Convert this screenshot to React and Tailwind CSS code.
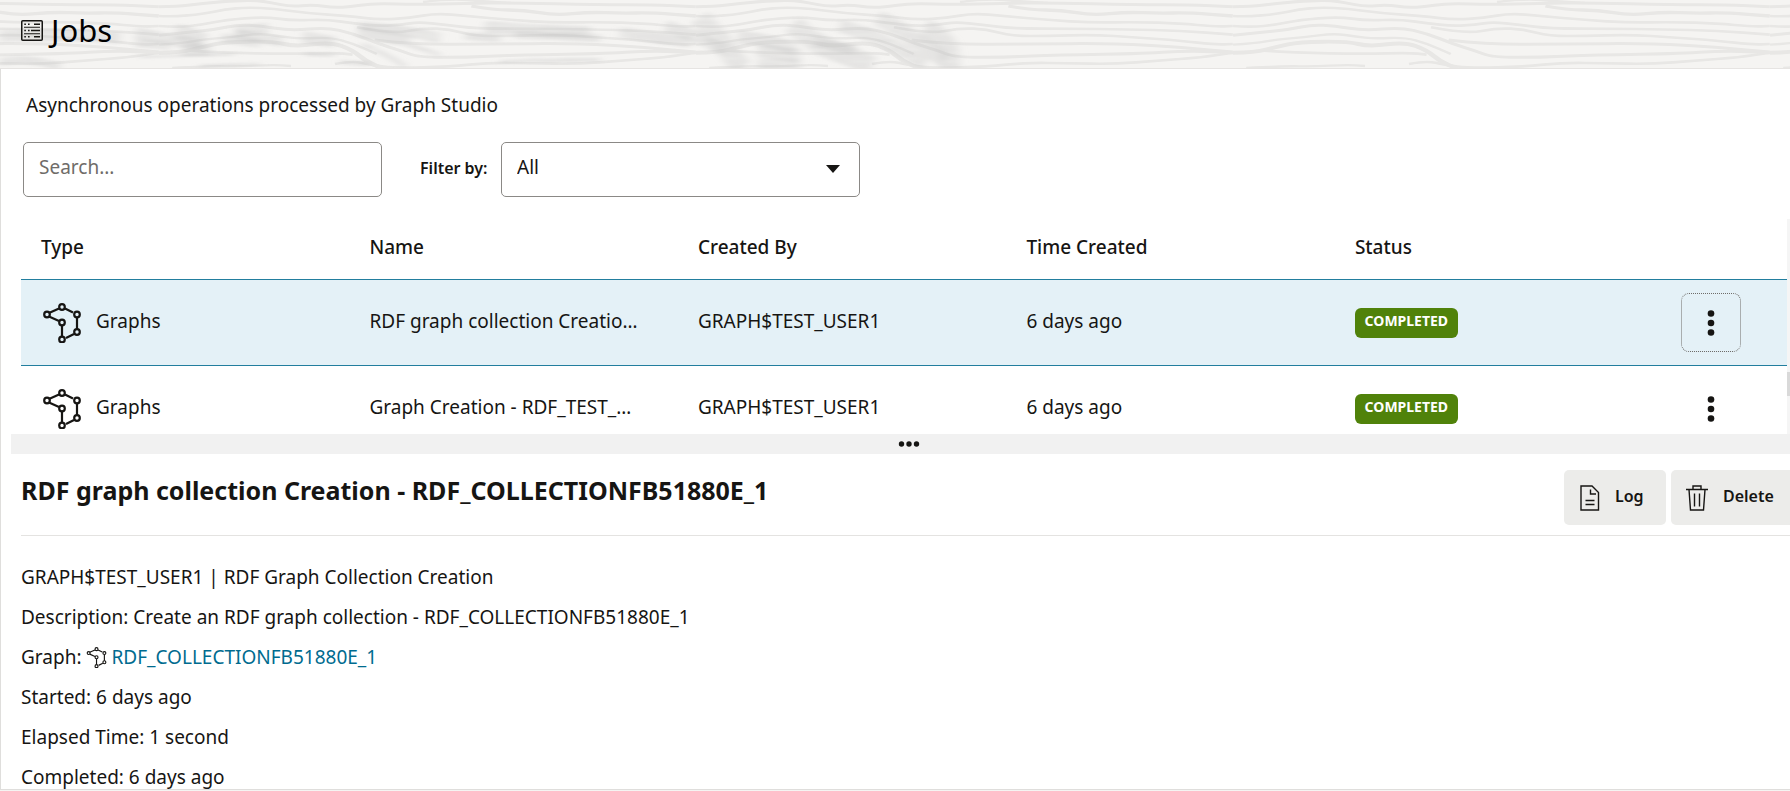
import React, { useState } from 'react';

const JOBS = [
    {
        id: 1,
        type: 'Graphs',
        name: 'RDF graph collection Creatio…',
        createdBy: 'GRAPH$TEST_USER1',
        created: '6 days ago',
        status: 'COMPLETED',
    },
    {
        id: 2,
        type: 'Graphs',
        name: 'Graph Creation - RDF_TEST_…',
        createdBy: 'GRAPH$TEST_USER1',
        created: '6 days ago',
        status: 'COMPLETED',
    },
];

// Wood grain lines of one banner tile: [stroke width, x, y, x, y, ...]
const GRAIN = [
    [9, 300, 20, 340, 20, 400, 10, 460, 3, 520, 1, 555, 8, 600, 20, 650, 14, 700, 24, 760, 16, 800, 10, 880, 14, 1000, 10, 1100, 8, 1300, 14, 1420, 14, 1520, 20],
    [7, 900, 6, 960, -4, 1040, 4, 1100, 9],
    [8, 300, 48, 330, 50, 400, 42, 450, 28, 500, 22, 560, 26, 640, 40, 730, 48, 800, 59, 870, 54, 930, 40, 1000, 48, 1100, 60, 1200, 68, 1300, 66, 1400, 70, 1480, 80, 1520, 78],
    [10, 1010, 18, 1060, 30, 1130, 30, 1200, 46, 1280, 36, 1350, 40, 1420, 38, 1520, 48],
    [8, 300, 78, 340, 82, 400, 74, 450, 60, 540, 50, 600, 62, 680, 58, 740, 70, 800, 78, 850, 74, 890, 66, 950, 74, 1020, 86, 1150, 86, 1280, 88, 1400, 92, 1520, 104],
    [9, 300, 106, 370, 96, 430, 88, 480, 74, 530, 78, 600, 92, 680, 82, 740, 100, 800, 132, 850, 152, 890, 172, 1000, 172, 1100, 165, 1300, 162, 1420, 152, 1520, 158],
    [7, 300, 134, 350, 130, 400, 118, 460, 112, 530, 100, 580, 110, 620, 116, 690, 112, 740, 130, 795, 162],
    [12, 300, 158, 350, 158, 400, 140, 450, 126, 560, 124, 610, 140, 690, 126, 740, 150, 770, 184, 810, 206],
    [8, 370, 152, 440, 158, 600, 162, 700, 158, 740, 164],
    [7, 330, 204, 420, 198, 480, 200, 560, 194, 600, 198],
    [8, 750, 82, 830, 102, 900, 84, 960, 88, 1020, 108, 1100, 108, 1200, 104, 1300, 112, 1400, 122, 1480, 134, 1520, 132],
    [9, 790, 120, 880, 134, 1050, 132, 1250, 130, 1400, 142, 1520, 156],
    [8, 700, 192, 740, 182, 780, 195, 840, 204, 960, 200, 1050, 188, 1150, 190, 1250, 192, 1350, 182, 1450, 172, 1520, 158],
];

// Darker knots over the grain, in banner pixels
const KNOTS = [
    [12, 0, 36, 60, 34, 120, 38],
    [8, 0, 62, 20, 58, 60, 66],
    [12, 136, 33, 160, 38, 200, 45],
    [8, 136, 43, 170, 46],
    [16, 176, 31, 190, 35, 204, 42],
    [12, 182, 50, 210, 50],
    [10, 222, 38, 260, 43],
    [11, 236, 31, 268, 28],
    [10, 235, 34, 282, 42],
    [12, 303, 37, 334, 42],
    [12, 358, 31, 380, 36, 410, 41],
    [10, 360, 26, 400, 30, 440, 38],
    [5, 362, 44, 385, 54, 405, 66],
    [5, 410, 45, 440, 55],
    [3, 140, 57, 235, 54],
    [4, 305, 54, 335, 55],
    [3, 200, 66, 260, 64],
    [5, 340, 62, 370, 64],
    [8, 465, 36, 500, 38],
    [12, 485, 27, 540, 31, 590, 32],
    [8, 515, 35, 555, 36, 600, 38],
    [4, 500, 62, 530, 60, 600, 60],
    [11, 620, 32, 655, 38, 690, 42],
    [20, 700, 17, 708, 28, 722, 42, 735, 60, 742, 68],
    [12, 666, 26, 690, 34, 725, 50],
    [13, 738, 37, 770, 40, 795, 50],
    [20, 793, 24, 805, 35, 825, 48, 850, 56, 872, 66],
    [14, 758, 50, 800, 56],
    [11, 758, 64, 800, 65],
    [13, 840, 26, 870, 34, 890, 44, 925, 64],
    [16, 878, 18, 895, 26, 915, 40, 945, 60],
    [20, 925, 28, 940, 36, 950, 50, 950, 68],
    [10, 815, 42, 855, 50],
];

const smooth = ([, ...pts]) => {
    let d = `M${pts[0]} ${pts[1]}`;
    for (let i = 2; i < pts.length - 2; i += 2) {
        d += ` Q${pts[i]} ${pts[i + 1]} ${(pts[i] + pts[i + 2]) / 2} ${(pts[i + 1] + pts[i + 3]) / 2}`;
    }
    return `${d} L${pts[pts.length - 2]} ${pts[pts.length - 1]}`;
};

const WoodGrain = () => (
    <svg className="absolute inset-0 h-full w-full" aria-hidden="true">
        <defs>
            <pattern id="grain" x="-378" width="537" height="69" patternUnits="userSpaceOnUse">
                <g transform="scale(0.44 0.3333) translate(-300 0)" fill="none" stroke="#e8e7e5">
                    {GRAIN.map((line, i) => <path key={i} d={smooth(line)} strokeWidth={line[0]} />)}
                </g>
            </pattern>
            {/* Horizontal streaks that colour the knots */}
            <pattern id="streaks" width="90" height="9" patternUnits="userSpaceOnUse">
                <rect width="90" height="9" fill="#b9bbba" fillOpacity="0.22" />
                <path d="M0 1.5h60M20 4.5h70M0 7.5h40" stroke="#b0b2b1" strokeWidth="1.6" strokeOpacity="0.14" />
            </pattern>
            <filter id="soft" x="-5%" y="-20%" width="110%" height="140%">
                <feGaussianBlur stdDeviation="4 1" />
            </filter>
        </defs>
        <rect width="100%" height="100%" fill="url(#grain)" />
        <g filter="url(#soft)" fill="none" stroke="url(#streaks)">
            {KNOTS.map((line, i) => <path key={i} d={smooth(line)} strokeWidth={line[0]} />)}
        </g>
    </svg>
);

const JobsIcon = () => (
    <svg width="22" height="21" viewBox="0 0 22 21" fill="none" stroke="#161513" aria-hidden="true">
        <rect x="0.75" y="0.75" width="20.5" height="19.5" rx="1" strokeWidth="1.5" />
        <path d="M3 7.3h16M3 13.7h16" strokeWidth="1.1" />
        <path d="M13 4.2h6M10 10.5h9M13 16.8h6" strokeWidth="1.6" />
        <path d="M3.3 4.2h1.6M7 4.2h1.6M3.3 10.5h1.6M7 10.5h1.6M3.3 16.8h1.6M7 16.8h1.6" strokeWidth="1.6" />
    </svg>
);

const GraphIcon = ({ className }) => (
    <svg className={className} viewBox="0 0 40 42" fill="none" stroke="#161513" strokeWidth="2.2" aria-hidden="true">
        <path d="M18 20 8 15.5M8 12l10-4.5M24 7.5l8 4M36 17v11M33 33l-8 4M21 35V25" />
        <circle cx="21" cy="6" r="2.8" />
        <circle cx="6" cy="13.5" r="2.8" />
        <circle cx="21" cy="21.5" r="2.8" />
        <circle cx="36" cy="13.5" r="2.8" />
        <circle cx="36" cy="31" r="2.8" />
        <circle cx="21" cy="38.5" r="2.8" />
    </svg>
);

const LogIcon = () => (
    <svg width="20" height="26" viewBox="0 0 20 26" fill="none" stroke="#161513" strokeWidth="1.4" aria-hidden="true">
        <path d="M1 1h11l6.5 6.5V25H1z" />
        <path d="M10.5 4.5v4.5H16M5.5 15.5h9M5.5 19.5h9" />
    </svg>
);

const TrashIcon = () => (
    <svg width="22" height="26" viewBox="0 0 22 26" fill="none" stroke="#161513" strokeWidth="1.4" aria-hidden="true">
        <path d="M0 4.5h22M7 4.5V1h8v3.5M3 4.5 4.5 25h13L19 4.5M8.5 8.5v13M13.5 8.5v13" />
    </svg>
);

const MenuDots = () => (
    <svg width="8" height="26" viewBox="0 0 8 26" fill="#161513" aria-hidden="true">
        <circle cx="4" cy="3.5" r="3.3" />
        <circle cx="4" cy="13" r="3.3" />
        <circle cx="4" cy="22.5" r="3.3" />
    </svg>
);

const App = () => {
    const [search, setSearch] = useState('');
    const [filter, setFilter] = useState('All');
    const [selectedId, setSelectedId] = useState(1);

    const cell = 'whitespace-nowrap pl-5 pb-0.5';

    return (
        <div className="flex h-screen flex-col bg-[#f5f4f2] font-['Noto_Sans','Open_Sans',sans-serif] text-[19px] leading-7 text-[#161513]">
            {/* Banner */}
            <header className="relative h-[69px] shrink-0 overflow-hidden border-b border-[#e6e4e2]">
                <WoodGrain />
                <div className="relative flex items-center gap-2 pl-[21px] pt-3">
                    <JobsIcon />
                    <h1 className="text-[31px] leading-9 text-black">Jobs</h1>
                </div>
            </header>

            <main className="mb-px flex min-h-0 flex-1 flex-col overflow-hidden border-b border-l border-[#dfdedc] bg-white">
                <p className="pl-[25px] pt-[22px]">Asynchronous operations processed by Graph Studio</p>

                {/* Search and filter */}
                <div className="mt-[23px] flex items-center pl-[22px]">
                    <input
                        type="text"
                        aria-label="Search"
                        placeholder="Search..."
                        value={search}
                        onChange={(e) => setSearch(e.target.value)}
                        className="h-[55px] w-[359px] rounded-[5px] border border-[#8b8986] bg-white px-[15px] pb-1.5 placeholder:text-[#6f6c69]"
                    />
                    <label htmlFor="filter" className="ml-[38px] w-[81px] whitespace-nowrap pb-1 text-base font-semibold">Filter by:</label>
                    <div className="relative">
                        <select
                            id="filter"
                            value={filter}
                            onChange={(e) => setFilter(e.target.value)}
                            className="h-[55px] w-[359px] appearance-none rounded-[5px] border border-[#8b8986] bg-white px-[15px] pb-1.5"
                        >
                            <option>All</option>
                            <option>Completed</option>
                            <option>Failed</option>
                        </select>
                        <svg width="14" height="8" viewBox="0 0 14 8" className="pointer-events-none absolute right-5 top-[23px]" aria-hidden="true">
                            <path d="M0 0h14L7 8z" fill="#161513" />
                        </svg>
                    </div>
                </div>

                {/* Jobs table */}
                <div className="mt-[22px] flex h-[215px] shrink-0 overflow-hidden pl-5">
                    <div className="min-w-0 flex-1">
                        <table className="w-full table-fixed border-collapse text-left">
                            <thead>
                                <tr className="h-[60px]">
                                    <th className="w-[18.6%] pb-1 pl-5 font-medium">Type</th>
                                    <th className="w-[18.6%] pb-1 pl-5 font-medium">Name</th>
                                    <th className="w-[18.6%] pb-1 pl-5 font-medium">Created By</th>
                                    <th className="w-[18.6%] pb-1 pl-5 font-medium">Time Created</th>
                                    <th className="w-[18.6%] pb-1 pl-5 font-medium">Status</th>
                                    <th aria-label="Actions" />
                                </tr>
                            </thead>
                            <tbody>
                                {JOBS.map(job => {
                                    const isSelected = job.id === selectedId;

                                    return (
                                        <tr
                                            key={job.id}
                                            onClick={() => setSelectedId(job.id)}
                                            className={`h-[86px] border-y ${isSelected ? 'border-[#227e9e] bg-[#e4f1f7]' : 'border-transparent'}`}
                                        >
                                            <td className="pl-5">
                                                <div className="flex items-center gap-[15px]">
                                                    <GraphIcon className="h-[42px] w-10" />
                                                    <span className="pb-0.5">{job.type}</span>
                                                </div>
                                            </td>
                                            <td className={cell}>{job.name}</td>
                                            <td className={cell}>{job.createdBy}</td>
                                            <td className={cell}>{job.created}</td>
                                            <td className="pl-5 pt-0.5">
                                                <span className="flex h-[30px] w-[103px] items-center justify-center rounded-md bg-[#50820a] pb-1 text-sm font-bold text-white">{job.status}</span>
                                            </td>
                                            <td className="pl-[18px]">
                                                <button
                                                    type="button"
                                                    aria-label="Job actions"
                                                    className={`flex h-[59px] w-[60px] items-center justify-center rounded-lg border border-dotted pt-0.5 ${isSelected ? 'border-[#6f6c69]' : 'border-transparent'}`}
                                                >
                                                    <MenuDots />
                                                </button>
                                            </td>
                                        </tr>
                                    );
                                })}
                            </tbody>
                        </table>
                    </div>
                    <div className="w-[3px] bg-[#f5f5f5] pt-[153px]">
                        <div className="h-6 bg-[#d9d9d9]" />
                    </div>
                </div>

                {/* Splitter */}
                <div className="-mr-4 ml-2.5 flex h-5 shrink-0 items-center justify-center bg-[#f1f1f1]">
                    <svg width="22" height="6" viewBox="0 0 22 6" fill="#161513" aria-hidden="true">
                        <circle cx="3.5" cy="3" r="2.7" />
                        <circle cx="11" cy="3" r="2.7" />
                        <circle cx="18.5" cy="3" r="2.7" />
                    </svg>
                </div>

                {/* Details of the selected job */}
                <section className="ml-5">
                    <div className="flex items-start justify-between border-b border-[#e4e3e1] pb-2.5 pt-4">
                        <h2 className="pt-1.5 text-[25px] leading-7 font-bold">RDF graph collection Creation - RDF_COLLECTIONFB51880E_1</h2>
                        <div className="flex gap-[5px] text-base font-semibold">
                            <button type="button" className="flex h-[55px] w-[102px] items-center gap-[15px] rounded-[5px] bg-[#ececea] pl-4">
                                <LogIcon />
                                <span className="pb-1">Log</span>
                            </button>
                            <button type="button" className="flex h-[55px] w-[119px] items-center gap-[15px] rounded-l-[5px] bg-[#ececea] pl-[15px]">
                                <TrashIcon />
                                <span className="pb-1">Delete</span>
                            </button>
                        </div>
                    </div>
                    <div className="pt-[21px] leading-10">
                        <p>GRAPH$TEST_USER1 | RDF Graph Collection Creation</p>
                        <p>Description: Create an RDF graph collection - RDF_COLLECTIONFB51880E_1</p>
                        <p className="flex items-center">
                            Graph:
                            <GraphIcon className="mx-1 h-[22px] w-[22px]" />
                            <a href="#graph" className="text-[#006b8f]">RDF_COLLECTIONFB51880E_1</a>
                        </p>
                        <p>Started: 6 days ago</p>
                        <p>Elapsed Time: 1 second</p>
                        <p>Completed: 6 days ago</p>
                    </div>
                </section>
            </main>
        </div>
    );
};

export default App;
